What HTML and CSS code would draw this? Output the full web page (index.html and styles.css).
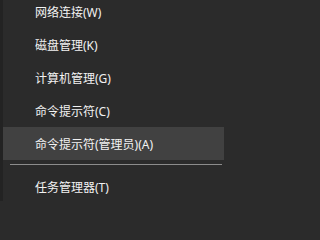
FILE: index.html
```html
<!DOCTYPE html>
<html lang="zh-CN">
<head>
<meta charset="utf-8">
<link rel="stylesheet" href="styles.css">
</head>
<body>
<div class="menu">
  <div class="item">网络连接(W)</div>
  <div class="item">磁盘管理(K)</div>
  <div class="item">计算机管理(G)</div>
  <div class="item">命令提示符(C)</div>
  <div class="item active">命令提示符(管理员)(A)</div>
  <div class="sep"></div>
  <div class="item">任务管理器(T)</div>
</div>
</body>
</html>
```
FILE: styles.css
```css
html, body {
  margin: 0;
  padding: 0;
  background: #2b2b2b;
}
body {
  width: 224px;
  height: 201px;
  overflow: hidden;
}
.menu {
  display: flex;
  flex-direction: column;
  margin-top: -5px;
  border-left: 3px solid #232323;
  background: #2b2b2b;
  font-family: "Noto Sans", "Noto Sans CJK SC", sans-serif;
  font-size: 12px;
  color: #f2f2f2;
}
.item {
  height: 33px;
  display: flex;
  align-items: center;
  padding-left: 32px;
  white-space: nowrap;
}
.item.active {
  background: #414141;
}
.sep {
  height: 1px;
  margin: 4px 2px 5px 7px;
  background: #8c8c8c;
}
```
